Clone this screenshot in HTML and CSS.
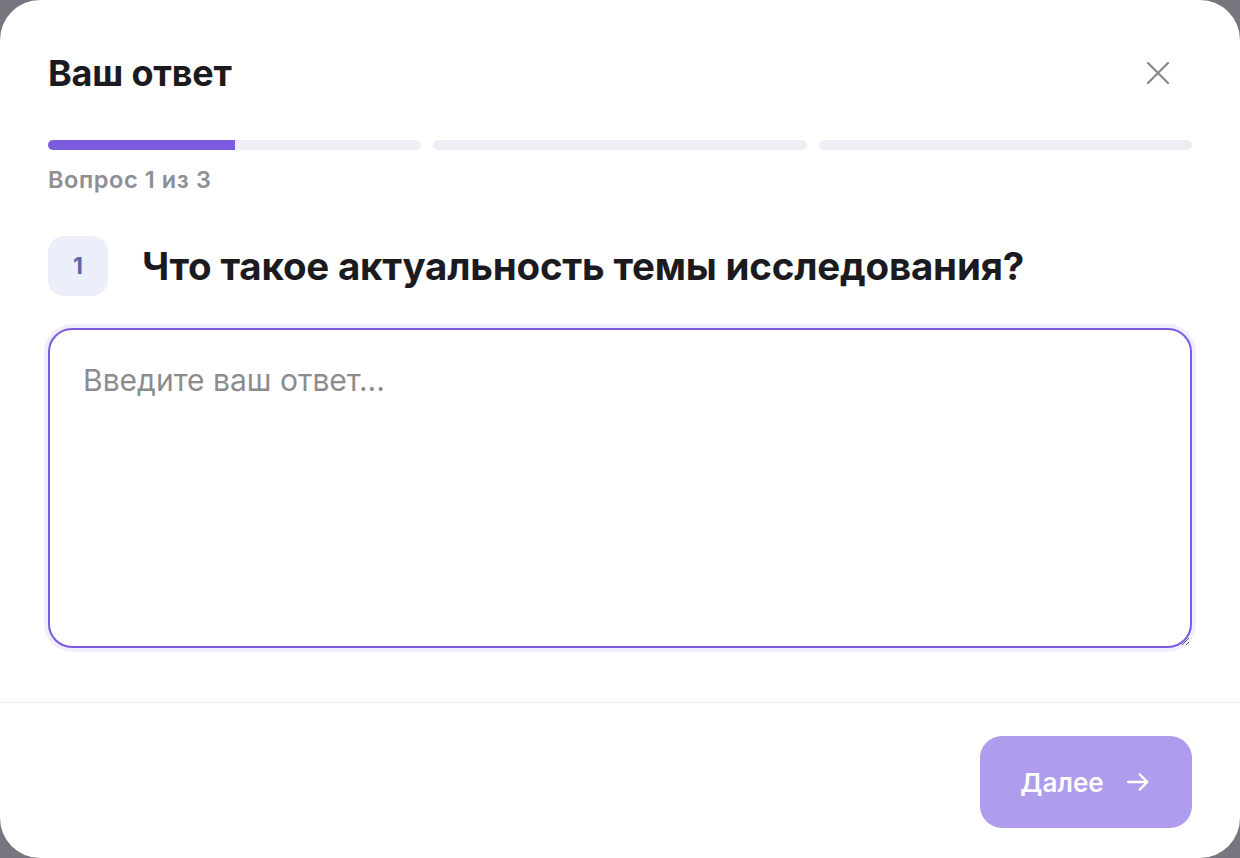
FILE: index.html
```html
<!DOCTYPE html>
<html lang="ru">
<head>
<meta charset="utf-8">
<title>Ваш ответ</title>
<link rel="stylesheet" href="styles.css">
</head>
<body>
<div class="modal">
  <div class="modal-body">
    <div class="header">
      <h1 class="title">Ваш ответ</h1>
      <button class="close" aria-label="Закрыть">
        <svg width="24" height="24" viewBox="0 0 24 24" fill="none"><path d="M2 2L22 22M22 2L2 22" stroke="#86868c" stroke-width="2.2" stroke-linecap="round"/></svg>
      </button>
    </div>
    <div class="progress">
      <div class="seg"><div class="fill" style="width:50%"></div></div>
      <div class="seg"></div>
      <div class="seg"></div>
    </div>
    <div class="step-label">Вопрос 1 из 3</div>
    <div class="question">
      <div class="badge">1</div>
      <h2 class="q-text">Что такое актуальность темы исследования?</h2>
    </div>
    <textarea class="answer" placeholder="Введите ваш ответ..."></textarea>
  </div>
  <div class="footer">
    <button class="next">
      <span>Далее</span>
      <svg width="28" height="28" viewBox="0 0 24 24" fill="none"><path d="M3.5 12H20M13.5 5.5L20 12L13.5 18.5" stroke="#fff" stroke-width="2" stroke-linecap="round" stroke-linejoin="round"/></svg>
    </button>
  </div>
</div>
</body>
</html>
```

FILE: styles.css
```css
html, body {
  margin: 0;
  padding: 0;
  height: 100%;
}
body {
  background: #77767e;
  font-family: Inter, "Noto Sans", "Liberation Sans", sans-serif;
  overflow: hidden;
}
.modal {
  width: 1240px;
  height: 858px;
  background: #fff;
  border-radius: 40px;
  display: flex;
  flex-direction: column;
  box-sizing: border-box;
}
.modal-body {
  padding: 48px 48px 54px;
  display: flex;
  flex-direction: column;
  border-bottom: 1.5px solid #ebebee;
}
.header {
  height: 50px;
  display: flex;
  align-items: center;
  justify-content: space-between;
}
.title {
  margin: 0;
  font-size: 36px;
  font-weight: 700;
  color: #1b1b1f;
  letter-spacing: -0.2px;
  line-height: 44px;
}
.close {
  border: 0;
  background: none;
  padding: 0;
  width: 24px;
  height: 24px;
  margin-right: 22px;
  display: flex;
  align-items: center;
  justify-content: center;
}
.progress {
  margin-top: 42px;
  display: flex;
  gap: 12px;
}
.seg {
  flex: 1;
  height: 10px;
  border-radius: 5px;
  background: #ededf3;
  overflow: hidden;
}
.fill {
  height: 100%;
  background: #7b5ce0;
}
.step-label {
  margin-top: 16px;
  font-size: 23.5px;
  line-height: 28px;
  font-weight: 600;
  color: #8e8e96;
  letter-spacing: 0.6px;
}
.question {
  margin-top: 42px;
  display: flex;
  align-items: center;
  gap: 34px;
}
.badge {
  width: 60px;
  height: 60px;
  border-radius: 16px;
  background: #eceef9;
  color: #5868a8;
  font-size: 23px;
  font-weight: 700;
  display: flex;
  align-items: center;
  justify-content: center;
  flex: none;
}
.q-text {
  margin: 0;
  font-size: 38.5px;
  font-weight: 700;
  color: #1b1b1f;
  line-height: 46px;
  letter-spacing: -0.2px;
}
.answer {
  margin-top: 32px;
  height: 320px;
  box-sizing: border-box;
  border: 2px solid #7a5ae0;
  border-radius: 24px;
  box-shadow: 0 0 0 4px #f1edfd;
  padding: 32px 33px;
  font-family: inherit;
  font-size: 30px;
  color: #1b1b1f;
  outline: none;
  resize: vertical;
}
.answer::placeholder {
  color: #8c8c8e;
}
.footer {
  flex: 1;
  display: flex;
  justify-content: flex-end;
  align-items: flex-start;
  padding: 33px 48px 0;
}
.next {
  width: 212px;
  height: 92px;
  border: 0;
  border-radius: 22px;
  background: #af9cec;
  color: #fff;
  font-family: inherit;
  font-size: 26px;
  font-weight: 600;
  display: flex;
  align-items: center;
  justify-content: center;
  gap: 20px;
  padding: 0;
}
```
